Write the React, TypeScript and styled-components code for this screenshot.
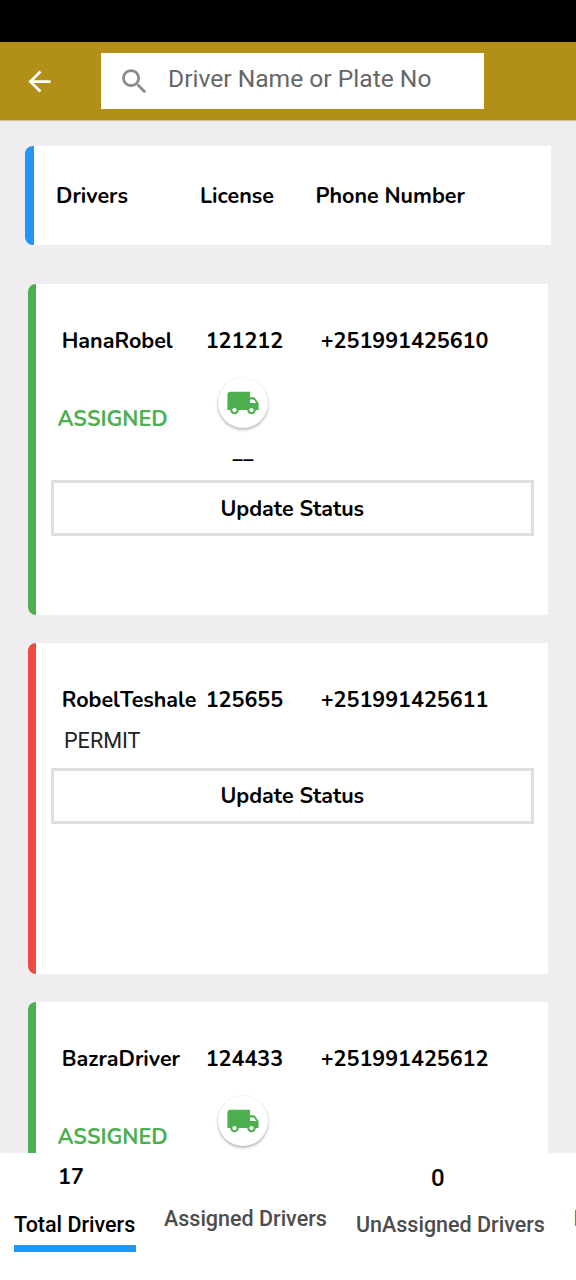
import React from "react";
import styled, { createGlobalStyle } from "styled-components";

const GlobalStyle = createGlobalStyle`
  * { box-sizing: border-box; }
  body { margin: 0; background: #f0edf1; }
`;

const rounded = `Nunito, Lato, "Open Sans", sans-serif`;
const roboto = `Roboto, "Liberation Sans", sans-serif`;

const Screen = styled.div`
  display: flex;
  flex-direction: column;
  width: 576px;
  height: 1280px;
  overflow: hidden;
  background: #f0edf1;
  font-family: ${roboto};
`;

const StatusBar = styled.div`
  flex: none;
  height: 42px;
  background: #000;
`;

const AppBar = styled.header`
  flex: none;
  display: flex;
  align-items: flex-start;
  height: 79px;
  padding: 11px 0 0 23px;
  background: #b28f17;
  border-bottom: 1px solid #d3c28f;
`;

const BackIcon = styled.svg`
  flex: none;
  width: 33px;
  height: 33px;
  margin-top: 12px;
  fill: #fff;
`;

const SearchBox = styled.div`
  display: flex;
  align-items: center;
  width: 383.4px;
  height: 56px;
  margin-left: 45px;
  padding-left: 17px;
  background: #fff;
`;

const SearchIcon = styled.svg`
  flex: none;
  width: 33px;
  height: 33px;
  fill: #8b8b8b;
`;

const Placeholder = styled.span`
  margin: -5px 0 0 17px;
  font-size: 24.6px;
  line-height: 30px;
  color: #666;
  white-space: nowrap;
`;

const List = styled.main`
  flex: 1;
  min-height: 0;
  overflow: hidden;
  display: flex;
  flex-direction: column;
  padding: 25px 28px 0;
`;

const Panel = styled.section<{ $accent: string }>`
  flex: none;
  background: #fff;
  border-left: 8px solid ${(p) => p.$accent};
  border-radius: 8px 0 0 8px;
`;

const HeaderPanel = styled(Panel)`
  display: flex;
  align-items: center;
  height: 99px;
  margin: 0 -3px 39px;
  padding: 1px 0 0 22px;
  border-left-width: 9px;
`;

const DriverPanel = styled(Panel)`
  display: flex;
  flex-direction: column;
  height: 331px;
  margin-bottom: 28px;
  padding: 42px 14px 0 15px;
`;

const Row = styled.div`
  display: flex;
  flex: none;
  height: 30px;
  padding-left: 10.7px;
`;

const Cell = styled.span<{ $width?: number }>`
  flex: none;
  width: ${(p) => (p.$width ? `${p.$width}px` : "auto")};
  font-family: ${rounded};
  font-size: 21.5px;
  font-weight: 700;
  line-height: 30px;
  color: #000;
  white-space: nowrap;
`;

const AssignedRow = styled.div`
  display: flex;
  flex: none;
  height: 124px;
  padding-left: 6.5px;
`;

const Assigned = styled(Cell)`
  padding-top: 48px;
  color: #4caf50;
`;

const Vehicle = styled.div`
  display: flex;
  flex-direction: column;
  align-items: center;
  width: 50px;
  padding-top: 22px;
`;

const TruckBadge = styled.div`
  display: flex;
  align-items: center;
  justify-content: center;
  flex: none;
  width: 50px;
  height: 50px;
  border-radius: 50%;
  background: #fff;
  box-shadow: 0 2px 3px rgba(0, 0, 0, 0.26), 0 0 3px rgba(0, 0, 0, 0.08);
  svg { width: 34px; height: 34px; fill: #4caf50; }
`;

const Plate = styled(Cell)`
  margin-top: 9px;
`;

const Permit = styled.div`
  flex: none;
  height: 52.5px;
  padding: 12px 0 0 13px;
  font-size: 21.6px;
  line-height: 28px;
  color: #222;
`;

const UpdateButton = styled.button`
  display: flex;
  align-items: center;
  justify-content: center;
  flex: none;
  height: 56px;
  margin-left: -0.5px;
  padding: 1px 0 0;
  border: 3px solid #e0e0e0;
  background: #fff;
`;

const BottomBar = styled.nav`
  flex: none;
  display: flex;
  gap: 28px;
  height: 127px;
  padding: 8px 0 0 14px;
  overflow: hidden;
  background: #fff;
`;

const Tab = styled.div<{ $active?: boolean; $width: number }>`
  flex: none;
  display: flex;
  flex-direction: column;
  width: ${(p) => p.$width}px;
  height: 91px;
  border-bottom: 7px solid ${(p) => (p.$active ? "#2196f3" : "transparent")};
  color: ${(p) => (p.$active ? "#000" : "#4d4d4d")};
`;

const Count = styled.span<{ $indent?: number; $plain?: boolean }>`
  height: 30px;
  padding-left: ${(p) => p.$indent ?? 0}px;
  font-family: ${(p) => (p.$plain ? roboto : rounded)};
  font-size: ${(p) => (p.$plain ? 24 : 21.5)}px;
  font-weight: ${(p) => (p.$plain ? 500 : 700)};
  line-height: ${(p) => (p.$plain ? 34 : 33)}px;
  color: #000;
`;

const TabLabel = styled.span<{ $raised?: boolean }>`
  margin-top: ${(p) => (p.$raised ? 13 : 19)}px;
  font-size: 21.5px;
  font-weight: 500;
  line-height: 30px;
  white-space: nowrap;
`;

const Truck = () => (
  <TruckBadge>
    <svg viewBox="0 0 24 24">
      <path d="M20 8h-3V4H3c-1.1 0-2 .9-2 2v11h2c0 1.66 1.34 3 3 3s3-1.34 3-3h6c0 1.66 1.34 3 3 3s3-1.34 3-3h2v-5l-3-4zM6 18.5c-.83 0-1.5-.67-1.5-1.5s.67-1.5 1.5-1.5 1.5.67 1.5 1.5-.67 1.5-1.5 1.5zm13.5-9l1.96 2.5H17V9.5h2.5zm-1.5 9c-.83 0-1.5-.67-1.5-1.5s.67-1.5 1.5-1.5 1.5.67 1.5 1.5-.67 1.5-1.5 1.5z" />
    </svg>
  </TruckBadge>
);

type Driver = {
  name: string;
  license: string;
  phone: string;
  plate?: string;
  assigned: boolean;
  updatable: boolean;
};

const drivers: Driver[] = [
  { name: "HanaRobel", license: "121212", phone: "+251991425610", plate: "__", assigned: true, updatable: true },
  { name: "RobelTeshale", license: "125655", phone: "+251991425611", assigned: false, updatable: true },
  { name: "BazraDriver", license: "124433", phone: "+251991425612", assigned: true, updatable: false },
];

const DriverCard = ({ driver }: { driver: Driver }) => (
  <DriverPanel $accent={driver.assigned ? "#4caf50" : "#f04a3e"}>
    <Row>
      <Cell $width={144}>{driver.name}</Cell>
      <Cell $width={115}>{driver.license}</Cell>
      <Cell>{driver.phone}</Cell>
    </Row>
    {driver.assigned ? (
      <AssignedRow>
        <Assigned $width={160.5}>ASSIGNED</Assigned>
        <Vehicle>
          <Truck />
          {driver.plate && <Plate>{driver.plate}</Plate>}
        </Vehicle>
      </AssignedRow>
    ) : (
      <Permit>PERMIT</Permit>
    )}
    {driver.updatable && (
      <UpdateButton>
        <Cell>Update Status</Cell>
      </UpdateButton>
    )}
  </DriverPanel>
);

export default function App() {
  return (
    <Screen>
      <GlobalStyle />
      <StatusBar />
      <AppBar>
        <BackIcon viewBox="0 0 24 24">
          <path d="M20 11H7.83l5.59-5.59L12 4l-8 8 8 8 1.41-1.41L7.83 13H20v-2z" />
        </BackIcon>
        <SearchBox>
          <SearchIcon viewBox="0 0 24 24">
            <path d="M15.5 14h-.79l-.28-.27C15.41 12.59 16 11.11 16 9.5 16 5.91 13.09 3 9.5 3S3 5.91 3 9.5 5.91 16 9.5 16c1.61 0 3.09-.59 4.23-1.57l.27.28v.79l5 4.99L20.49 19l-4.99-5zm-6 0C7.01 14 5 11.99 5 9.5S7.01 5 9.5 5 14 7.01 14 9.5 11.99 14 9.5 14z" />
          </SearchIcon>
          <Placeholder>Driver Name or Plate No</Placeholder>
        </SearchBox>
      </AppBar>
      <List>
        <HeaderPanel $accent="#2196f3">
          <Cell $width={144}>Drivers</Cell>
          <Cell $width={115.5}>License</Cell>
          <Cell>Phone Number</Cell>
        </HeaderPanel>
        {drivers.map((d) => (
          <DriverCard key={d.phone} driver={d} />
        ))}
      </List>
      <BottomBar>
        <Tab $active $width={122}>
          <Count $indent={44}>17</Count>
          <TabLabel>Total Drivers</TabLabel>
        </Tab>
        <Tab $width={164}>
          <Count />
          <TabLabel $raised>Assigned Drivers</TabLabel>
        </Tab>
        <Tab $width={189.5}>
          <Count $indent={75} $plain>0</Count>
          <TabLabel>UnAssigned Drivers</TabLabel>
        </Tab>
        <Tab $width={10}>
          <Count />
          <TabLabel $raised>I</TabLabel>
        </Tab>
      </BottomBar>
    </Screen>
  );
}
